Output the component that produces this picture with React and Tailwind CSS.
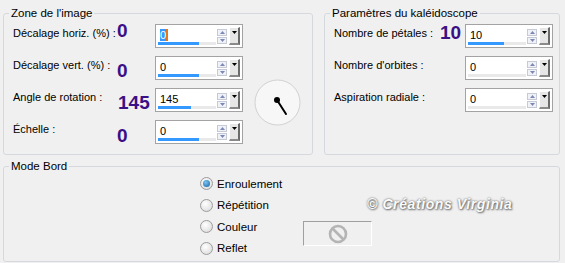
import React from "react";

const font = "font-['Liberation_Sans',Arial,sans-serif]";
const mark = "text-[#3b0f85] font-bold text-[19px] leading-[19px]";

function SpinBox({ value, barClass, selected }) {
  return (
    <div className="flex h-[24px] w-[88px] border border-[#a3a3a3] bg-white p-[2px]">
      <div className="flex flex-1 flex-col">
        <div className="flex flex-1 items-center pl-[2px] text-[11px] leading-[12px] text-black">
          {selected ? (
            <>
              <span className="bg-[#3399ff] text-white">{value}</span>
              <span className="h-[12px] w-[2px] bg-[#e8751a]" />
            </>
          ) : (
            <span>{value}</span>
          )}
        </div>
        <div className="h-[3px] bg-[#e9e9e9]">
          {barClass && <div className={`h-full bg-[#3399ff] ${barClass}`} />}
        </div>
      </div>
      <div className="ml-[1px] flex w-[10px] flex-col justify-center gap-[1px]">
        <div className="flex h-[7px] items-center justify-center border border-[#c6c9d6] bg-[#f1f2f6]">
          <svg width="5" height="3" viewBox="0 0 5 3">
            <path d="M0 3 L2.5 0 L5 3 Z" fill="#7a88b8" />
          </svg>
        </div>
        <div className="flex h-[7px] items-center justify-center border border-[#c6c9d6] bg-[#f1f2f6]">
          <svg width="5" height="3" viewBox="0 0 5 3">
            <path d="M0 0 L2.5 3 L5 0 Z" fill="#7a88b8" />
          </svg>
        </div>
      </div>
      <div className="ml-[2px] flex w-[11px] justify-center border-t border-l border-r-2 border-b-2 border-t-white border-l-white border-r-[#6b6b6b] border-b-[#8a8a8a] bg-[#e6e6e6] pt-[3px]">
        <svg width="5" height="3" viewBox="0 0 5 3">
          <path d="M0 0 L2.5 3 L5 0 Z" fill="#000" />
        </svg>
      </div>
    </div>
  );
}

function Group({ title, className, children }) {
  return (
    <div className={`relative rounded-[3px] border border-[#d5d9dd] ${className}`}>
      <span className="absolute left-[5px] top-[-8px] bg-[#f0f0f0] px-[2px] text-[11.5px] leading-[14px] text-black">
        {title}
      </span>
      {children}
    </div>
  );
}

function Radio({ label, checked }) {
  return (
    <div className="flex h-[21.5px] items-center gap-[4px]">
      <div className="flex h-[13px] w-[13px] items-center justify-center rounded-full border border-[#9c9c9c] bg-[radial-gradient(circle_at_40%_35%,#ffffff,#d6d6d6)]">
        {checked && (
          <div className="h-[7px] w-[7px] rounded-full bg-[radial-gradient(circle_at_40%_35%,#7cc4f2,#1461a0)]" />
        )}
      </div>
      <span className="text-[11.5px] leading-[14px] text-black">{label}</span>
    </div>
  );
}

export default function App() {
  const left = [
    { label: "Décalage horiz. (%) :", n: "0", nm: "mt-[-3px]", v: "0", bar: "w-[41px]", sel: true },
    { label: "Décalage vert. (%) :", n: "0", nm: "mt-[5px]", v: "0", bar: "w-[41px]" },
    { label: "Angle de rotation :", n: "145", nm: "mt-[5px] ml-[1px]", v: "145", bar: "w-[33px]" },
    { label: "Échelle :", n: "0", nm: "mt-[6px]", v: "0", bar: "w-[41px]" },
  ];
  const right = [
    { label: "Nombre de pétales :", n: "10", nm: "mt-[-1px]", v: "10", bar: "w-[36px]" },
    { label: "Nombre d'orbites :", v: "0" },
    { label: "Aspiration radiale :", v: "0" },
  ];

  return (
    <div className={`h-[263px] w-[565px] overflow-hidden bg-[#f0f0f0] pl-[3px] pt-[13px] ${font}`}>
      <div className="flex gap-[11px]">
        <Group title="Zone de l'image" className="h-[142px] w-[310px]">
          <div className="flex">
            <div className="grid grid-cols-[104px_38px_88px] gap-y-[8px] pl-[9px] pt-[10px]">
              {left.map((r) => (
                <React.Fragment key={r.label}>
                  <div className="h-[24px] pt-[3px] text-[11px] leading-[13px] text-black">{r.label}</div>
                  <div className={`${mark} ${r.nm}`}>{r.n}</div>
                  <SpinBox value={r.v} barClass={r.bar} selected={r.sel} />
                </React.Fragment>
              ))}
            </div>
            <div className="ml-[11px] mt-[65px]">
              <svg width="47" height="47" viewBox="0 0 47 47">
                <circle cx="23.5" cy="23.5" r="22.5" fill="#f7f7f7" stroke="#d2d2d2" />
                <line x1="23" y1="21" x2="32" y2="35" stroke="#000" strokeWidth="2" strokeLinecap="round" />
                <circle cx="23" cy="21" r="3" fill="#000" />
              </svg>
            </div>
          </div>
        </Group>
        <Group title="Paramètres du kaléidoscope" className="h-[142px] w-[236px]">
          <div className="grid grid-cols-[106px_25px_88px] gap-y-[8px] pl-[9px] pt-[10px]">
            {right.map((r) => (
              <React.Fragment key={r.label}>
                <div className="h-[24px] pt-[3px] text-[11px] leading-[13px] text-black">{r.label}</div>
                <div className={`${mark} ${r.nm || ""}`}>{r.n}</div>
                <SpinBox value={r.v} barClass={r.bar} />
              </React.Fragment>
            ))}
          </div>
        </Group>
      </div>

      <Group title="Mode Bord" className="mt-[11px] h-[96px] w-[557px]">
        <div className="flex pl-[196px] pt-[6px]">
          <div className="flex w-[103px] flex-col">
            <Radio label="Enroulement" checked />
            <Radio label="Répétition" />
            <Radio label="Couleur" />
            <Radio label="Reflet" />
          </div>
          <div className="mt-[48px] flex h-[25px] w-[69px] items-center justify-center border border-t-[#a0a0a0] border-l-[#a0a0a0] border-r-white border-b-white">
            <svg width="20" height="20" viewBox="0 0 20 20">
              <circle cx="10" cy="10" r="8" fill="none" stroke="#b4b4b4" strokeWidth="2.6" />
              <line x1="4.5" y1="4.5" x2="15.5" y2="15.5" stroke="#b4b4b4" strokeWidth="2.6" />
            </svg>
          </div>
        </div>
        <span className="absolute left-[363px] top-[29px] text-[14px] font-bold italic leading-[16px] tracking-[0.6px] text-[#fbfbfb] [text-shadow:0_0_2px_#555,1px_1px_2px_#777]">
          © Créations Virginia
        </span>
      </Group>
    </div>
  );
}
